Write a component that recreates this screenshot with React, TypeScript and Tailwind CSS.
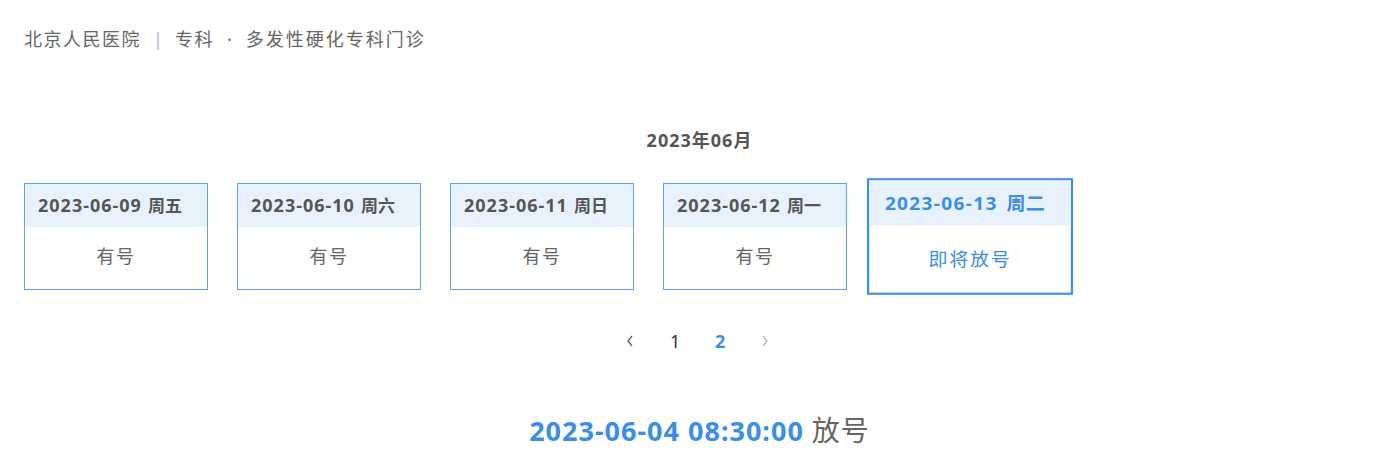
import React from "react";

const font = { fontFamily: '"Noto Sans", "Noto Sans CJK SC", sans-serif' };

const days = [
  { date: "2023-06-09", week: "周五", status: "有号" },
  { date: "2023-06-10", week: "周六", status: "有号" },
  { date: "2023-06-11", week: "周日", status: "有号" },
  { date: "2023-06-12", week: "周一", status: "有号" },
];

export default function App() {
  return (
    <div className="w-[1399px] h-[472px] bg-white overflow-hidden font-['Noto_Sans','Noto_Sans_CJK_SC',sans-serif]" style={font}>
      <div className="flex items-center pl-6 pt-[27px] h-[51px] text-[18px] leading-6 text-[#666]">
        <span className="tracking-[1.5px]">北京人民医院</span>
        <span className="ml-[12px] text-[#aab4c4]">|</span>
        <span className="ml-[12px] tracking-[1.5px]">专科</span>
        <span className="ml-[13px]">·</span>
        <span className="ml-[14px] tracking-[2px]">多发性硬化专科门诊</span>
      </div>

      <div className="mt-[79px] h-5 leading-5 text-center text-[18px] font-bold text-[#555] tracking-[1px]">
        2023年06月
      </div>

      <div className="mt-[33px] flex pl-6 gap-[29px]">
        {days.map((d) => (
          <div key={d.date} className="w-[184px] h-[107px] border-[1.5px] border-[#63a2e8] flex flex-col bg-white">
            <div className="h-[43px] bg-[#e8f2fc] flex items-center pl-[13px] text-[18px] font-bold text-[#555] whitespace-nowrap">
              <span className="tracking-[1px]">{d.date}</span>
              <span className="ml-[6px] text-[17px]">{d.week}</span>
            </div>
            <div className="flex-1 flex items-center justify-center text-[18px] text-[#666] tracking-[1.5px] pb-[3px]">
              {d.status}
            </div>
          </div>
        ))}
        <div className="ml-[2px] w-[184px] h-[107px] border-[2.5px] border-[#3d8fe9] flex flex-col bg-white scale-x-[1.12] scale-y-[1.09] origin-center">
          <div className="h-[42px] bg-[#e8f2fc] flex items-center pl-[14px] text-[17px] font-bold text-[#3a8ee8] whitespace-nowrap">
            <span className="tracking-[1.2px]">2023-06-13</span>
            <span className="ml-[8px] text-[17px]">周二</span>
          </div>
          <div className="flex-1 flex items-center justify-center text-[17px] text-[#3a8ee8] tracking-[1.5px]">
            即将放号
          </div>
        </div>
      </div>

      <div className="mt-[39px] h-6 flex items-center justify-center text-[18px] pr-[4px]">
        <svg width="10" height="14" viewBox="0 0 10 14" className="mr-[35px]">
          <path d="M7 2 L3 7 L7 12" fill="none" stroke="#666" strokeWidth="1.4" />
        </svg>
        <span className="text-[#333] w-[10px] text-center">1</span>
        <span className="ml-[35px] text-[#3a8ee8] font-bold w-[10px] text-center">2</span>
        <svg width="10" height="14" viewBox="0 0 10 14" className="ml-[35px]">
          <path d="M3 2 L7 7 L3 12" fill="none" stroke="#bbb" strokeWidth="1.3" />
        </svg>
      </div>

      <div className="mt-[59px] h-9 leading-9 text-center text-[27px]">
        <span className="font-bold text-[#3a8ee8] tracking-[1px]">2023-06-04 08:30:00</span>
        <span className="ml-[8px] text-[#666] text-[28px] tracking-[1px]">放号</span>
      </div>
    </div>
  );
}
